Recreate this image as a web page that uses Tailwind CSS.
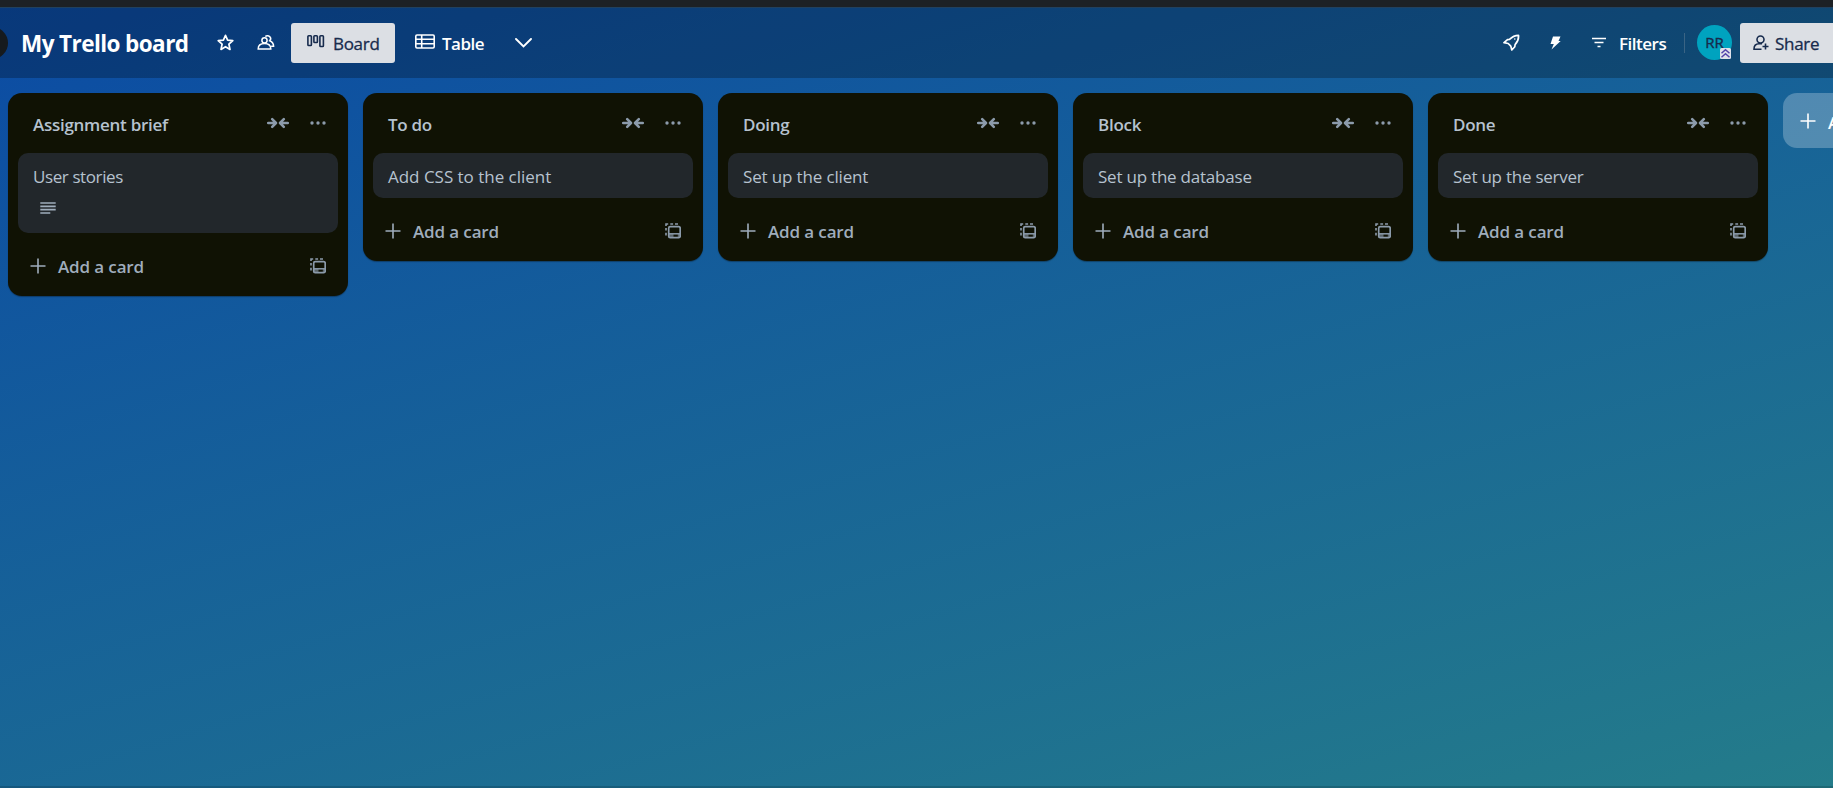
<!DOCTYPE html>
<html lang="en">
<head>
<meta charset="utf-8">
<title>My Trello board</title>
<script src="https://cdn.jsdelivr.net/npm/@tailwindcss/browser@4"></script>
</head>
<body class="overflow-hidden">
<svg class="hidden">
  <symbol id="collapse" viewBox="0 0 22 12"><path d="M1.200 6H8.500M5.200 2.200 9 6 5.200 9.800M20.800 6H13.500M16.800 2.200 13 6l3.800 3.800" fill="none" stroke="currentColor" stroke-width="2.500" stroke-linecap="round" stroke-linejoin="round"/></symbol>
  <symbol id="dots" viewBox="0 0 16 4"><circle cx="2" cy="2" r="1.700" fill="currentColor"/><circle cx="8" cy="2" r="1.700" fill="currentColor"/><circle cx="14" cy="2" r="1.700" fill="currentColor"/></symbol>
  <symbol id="plus" viewBox="0 0 16 16"><path d="M8 .5v15M.5 8h15" fill="none" stroke="currentColor" stroke-width="1.600"/></symbol>
  <symbol id="template" viewBox="0 0 16 16"><path d="M1 3V1H3.200M5.300 1h2.800M10 1h3M1 5v2.600M1 9.800v2.600" fill="none" stroke="currentColor" stroke-width="1.600"/><rect x="3.700" y="3.700" width="11.500" height="11" rx="1.500" fill="none" stroke="currentColor" stroke-width="1.700"/><path d="M3.700 10.800H15.200" stroke="currentColor" stroke-width="1.500"/><path d="M4 11h4.500v3.500H4zM12.800 11h2v3.500h-2z" fill="currentColor" opacity=".6"/></symbol>
  <symbol id="lines" viewBox="0 0 16 12"><path d="M.3 1h15.400M.3 4.300h15.400M.3 7.600h15.400M.3 11h10" fill="none" stroke="currentColor" stroke-width="1.700"/></symbol>
</svg>
<div class="flex h-[788px] w-[1833px] flex-col overflow-hidden bg-[linear-gradient(163deg,#0b4ba4,#247c8a)] font-['Open_Sans','Noto_Sans',sans-serif] text-[17px]">
  <div class="h-[7px] shrink-0 bg-[#1d2125]"></div>
  <header class="flex h-[71px] shrink-0 items-center border-t border-[#21415f] bg-black/25 pb-px text-white">
    <div class="-ml-6 size-8 shrink-0 rounded-full bg-[#161a1d]"></div>
    <h1 class="ml-[13px] w-[196px] whitespace-nowrap pt-[3px] text-[22.5px] leading-8 font-bold tracking-[-0.58px]">My Trello board</h1>
    <svg class="h-[17px] w-[17px] shrink-0" viewBox="0 0 17 17"><path d="M8.500 1.300l2.100 4.800 5.200.6-3.900 3.500 1.100 5.200-4.500-2.700L4 15.400l1.100-5.200L1.200 6.700l5.200-.6z" fill="none" stroke="currentColor" stroke-width="1.700" stroke-linejoin="round"/></svg>
    <svg class="ml-[23px] h-[17px] w-[18px] shrink-0" viewBox="0 0 18 17"><g fill="none" stroke="currentColor" stroke-width="1.500"><circle cx="7.500" cy="6.300" r="2.600"/><path d="M1.200 15c0-3.500 2.600-5.400 6.300-5.400s6.300 1.900 6.300 5.400zM8.300 2.600a2.900 2.900 0 1 1 4.400 4.200c2.300 1 3.900 3 3.900 5.500h-2.400"/></g></svg>
    <div class="ml-4 flex h-10 w-[104px] shrink-0 items-center rounded-[3px] bg-[#dcdfe4] pl-4 text-[#172b4d]">
      <svg class="mb-0.5 h-[13px] w-[18px] shrink-0" viewBox="0 0 18 13"><g fill="none" stroke="currentColor" stroke-width="1.600"><rect x=".9" y=".8" width="3.500" height="9.700" rx=".8"/><rect x="6.900" y=".8" width="3.500" height="6.700" rx=".8"/><rect x="12.900" y=".8" width="3.500" height="10.700" rx=".8"/></g></svg>
      <span class="ml-2 whitespace-nowrap pt-[3px] leading-6 tracking-[-0.3px] [-webkit-text-stroke:0.3px]">Board</span>
    </div>
    <svg class="ml-5 mb-0.5 h-[15px] w-5 shrink-0" viewBox="0 0 20 15"><path d="M2 1h16q1.200 0 1.200 1.200v10.600q0 1.200-1.200 1.200H2q-1.200 0-1.200-1.200V2.200Q.8 1 2 1zM.8 5.300h18.400M.8 9.700h18.400M6.700 1v13" fill="none" stroke="currentColor" stroke-width="1.600"/></svg>
    <span class="ml-[7px] w-[73px] whitespace-nowrap pt-[3px] leading-6 font-semibold tracking-[-0.5px]">Table</span>
    <svg class="mt-px h-[10px] w-[17px] shrink-0" viewBox="0 0 17 10"><path d="M1 1l7.500 7.500L16 1" fill="none" stroke="currentColor" stroke-width="1.900" stroke-linecap="round"/></svg>
    <div class="ml-auto flex shrink-0 items-center">
      <svg class="h-[17px] w-[17px]" viewBox="0 0 17 17"><path d="M15.500 1.300Q10.500 1.300 6.500 5.400L4.500 5.600 1 8.700l4.200.8 2.600 2.600 1 3.900 3-3.300.3-2.100Q16 6.500 15.500 1.300z" fill="none" stroke="currentColor" stroke-width="1.700" stroke-linejoin="round"/><circle cx="11.800" cy="5" r=".8" fill="currentColor"/></svg>
      <svg class="ml-[30px] h-[14px] w-[11px]" viewBox="0 0 11 14"><path d="M3 .5h7.500L8.500 5h2.200L1.500 13.500 3.800 8H.5z" fill="currentColor"/></svg>
      <svg class="ml-[31px] h-[11px] w-[14px]" viewBox="0 0 14 11"><path d="M0 1.500h14M2.500 5.500h9M5.500 9.500h3" fill="none" stroke="currentColor" stroke-width="1.700"/></svg>
      <span class="ml-[13px] w-[65px] whitespace-nowrap pt-[3px] leading-6 font-semibold tracking-[-0.5px]">Filters</span>
      <div class="h-5 w-px bg-[#3a6484]"></div>
      <div class="relative ml-3 flex size-[35px] items-center justify-center rounded-full bg-[#00a3bf] text-[15px] tracking-[-0.1px] text-[#172b4d] [-webkit-text-stroke:0.4px]">RR
        <svg class="absolute right-px bottom-px size-[11px]" viewBox="0 0 11 11"><rect width="11" height="11" rx="1.500" fill="#dfe1ea"/><path d="M1.500 5.300L5.500 1.800l4 3.500M1.500 9.300L5.500 5.800l4 3.500" fill="none" stroke="#5243aa" stroke-width="1.500"/></svg>
      </div>
      <div class="ml-2 flex h-10 w-[93px] items-center rounded-l-[3px] bg-[#dcdfe4] pl-[13px] text-[#172b4d]">
        <svg class="h-4 w-4 shrink-0" viewBox="0 0 16 16"><path d="M8.500 14.200H1c0-3.500 1.500-5.400 5-5.400h3M12.500 8.500v6M9.500 11.500h6" fill="none" stroke="currentColor" stroke-width="1.600"/><circle cx="7.500" cy="4.500" r="3.500" fill="none" stroke="currentColor" stroke-width="1.600"/></svg>
        <span class="ml-1.5 whitespace-nowrap pt-[3px] leading-6 tracking-[-0.3px] [-webkit-text-stroke:0.3px]">Share</span>
      </div>
    </div>
  </header>
  <main id="board" class="flex grow items-start gap-[15px] pt-[15px] pl-2"></main>
  <div class="h-0.5 shrink-0 bg-black/15"></div>
</div>
<script>
const lists = [
  ['Assignment brief', 'User stories', true, 'tracking-[-0.4px]'],
  ['To do', 'Add CSS to the client', false, 'tracking-[-0.02px]'],
  ['Doing', 'Set up the client', false, 'tracking-[-0.15px]'],
  ['Block', 'Set up the database', false, 'tracking-[-0.22px]'],
  ['Done', 'Set up the server', false, 'tracking-[-0.24px]'],
];
document.getElementById('board').innerHTML = lists.map(([title, card, described, tracking]) => `
  <section class="w-[340px] shrink-0 rounded-[14px] bg-[#101204] px-2.5 text-[#9fadbc] shadow-[0_1px_1px_#09131f66]">
    <div class="flex h-[60px] items-center pl-[15px]">
      <h2 class="grow whitespace-nowrap pt-[3px] leading-6 font-semibold tracking-[-0.28px] text-[#b6c2cf]">${title}</h2>
      <svg class="h-3 w-[22px] text-[#8c9bab]"><use href="#collapse"/></svg>
      <svg class="ml-[21px] mr-3 h-1 w-4 text-[#8c9bab]"><use href="#dots"/></svg>
    </div>
    <article class="rounded-[10px] bg-[#22272b] px-[15px] pt-3 text-[#b6c2cf] ${described ? 'h-20' : 'h-[45px]'}">
      <p class="whitespace-nowrap leading-6 ${tracking}">${card}</p>
      ${described ? '<svg class="mt-[13px] ml-[7px] h-3 w-4 text-[#9fadbc]"><use href="#lines"/></svg>' : ''}
    </article>
    <div class="flex h-[63px] items-center pb-px pl-3">
      <svg class="mt-1 size-4"><use href="#plus"/></svg>
      <span class="mt-[5px] ml-3 grow whitespace-nowrap leading-6 font-semibold tracking-[-0.13px]">Add a card</span>
      <svg class="mt-[3px] mr-3 size-4 text-[#8c9bab]"><use href="#template"/></svg>
    </div>
  </section>`).join('') + `
  <div class="flex h-[55px] w-[340px] shrink-0 items-center rounded-[14px] bg-white/25 pl-[17px] font-semibold text-white">
    <svg class="size-4"><use href="#plus"/></svg>
    <span class="ml-3 whitespace-nowrap pt-1 leading-6">Add another list</span>
  </div>`;
</script>
</body>
</html>
